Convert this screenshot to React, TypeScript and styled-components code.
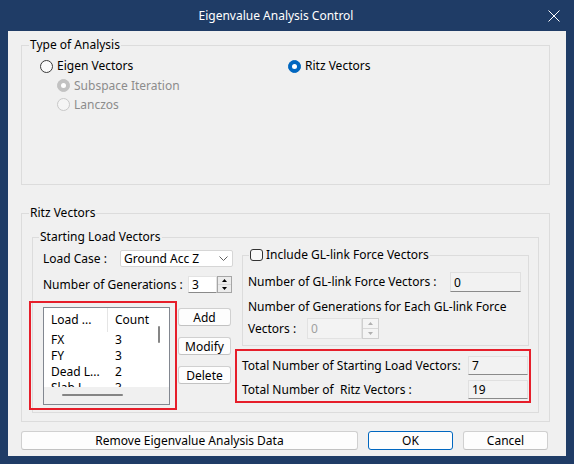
import React from "react";
import styled, { createGlobalStyle, css } from "styled-components";

const GlobalStyle = createGlobalStyle`
  html, body { margin: 0; padding: 0; }
  body {
    font-family: "Noto Sans", "Open Sans", "DejaVu Sans", sans-serif;
    font-size: 12px;
    color: #000;
    background: #1f3c66;
  }
  * { box-sizing: border-box; }
`;

const Window = styled.div`
  width: 574px;
  height: 464px;
  background: #1f3c66;
  display: flex;
  flex-direction: column;
`;

const TitleBar = styled.div`
  height: 31px;
  flex: none;
  display: flex;
  align-items: center;
  color: #fff;
`;

const Title = styled.div`
  flex: 1;
  text-align: center;
  padding-left: 18px;
  line-height: 16px;
`;

const CloseBox = styled.div`
  width: 40px;
  height: 31px;
  display: flex;
  align-items: center;
  justify-content: center;
`;

const Client = styled.div`
  flex: 1;
  margin: 0 8px 8px;
  background: #f0f0f0;
  padding: 6px 16px 0 13px;
  display: flex;
  flex-direction: column;
`;

const Group = styled.fieldset<{ $h?: number; $mt?: number }>`
  margin: 0;
  margin-top: ${(p) => p.$mt ?? 0}px;
  padding: 0;
  min-width: 0;
  border: 1px solid #dcdcdc;
  ${(p) =>
    p.$h !== undefined &&
    css`
      height: ${p.$h}px;
    `}
`;

const Legend = styled.legend<{ $ml: number }>`
  margin-left: ${(p) => p.$ml}px;
  padding: 0 1px;
  height: 16px;
  line-height: 16px;
  display: flex;
  align-items: center;
  gap: 3px;
`;

/* Type of Analysis */
const TypeBody = styled.div`
  display: grid;
  grid-template-columns: 248px 1fr;
  padding: 3px 0 0 18px;
`;

const RadioCol = styled.div`
  display: flex;
  flex-direction: column;
`;

const RadioRow = styled.div<{ $indent?: number; $h: number; $disabled?: boolean }>`
  display: flex;
  align-items: center;
  gap: 4px;
  height: ${(p) => p.$h}px;
  padding-left: ${(p) => p.$indent ?? 0}px;
  color: ${(p) => (p.$disabled ? "#8c8c8c" : "#000")};
  line-height: 16px;
`;

const RadioDot = styled.span<{ $checked?: boolean; $disabled?: boolean }>`
  width: 13px;
  height: 13px;
  flex: none;
  border-radius: 50%;
  display: flex;
  align-items: center;
  justify-content: center;
  border: 1px solid
    ${(p) =>
      p.$checked
        ? p.$disabled
          ? "#c2c2c2"
          : "#0067c0"
        : p.$disabled
        ? "#c8c8c8"
        : "#3a3a3a"};
  background: ${(p) =>
    p.$checked ? (p.$disabled ? "#c2c2c2" : "#0067c0") : p.$disabled ? "#f5f5f5" : "#fafafa"};
  &::after {
    content: "";
    display: ${(p) => (p.$checked ? "block" : "none")};
    width: 5px;
    height: 5px;
    border-radius: 50%;
    background: #fff;
  }
`;

/* Ritz */
const RitzBody = styled.div`
  padding: 8px 10px 8px 10px;
`;

const SLVBody = styled.div`
  display: grid;
  grid-template-columns: 190px 287px;
  column-gap: 9px;
  padding: 2px 9px 7px 10px;
`;

const LeftCol = styled.div`
  display: flex;
  flex-direction: column;
  padding-top: 3px;
`;

const RightCol = styled.div`
  display: flex;
  flex-direction: column;
`;

const FieldRow = styled.div<{ $h: number; $mt?: number }>`
  display: flex;
  align-items: center;
  height: ${(p) => p.$h}px;
  margin-top: ${(p) => p.$mt ?? 0}px;
  line-height: 16px;
  white-space: pre;
`;

const Label = styled.span<{ $w: number }>`
  width: ${(p) => p.$w}px;
  flex: none;
  white-space: pre;
`;

const Combo = styled.div`
  width: 113px;
  height: 17px;
  background: #fff;
  border: 1px solid #d6d6d6;
  border-radius: 2px;
  display: flex;
  align-items: center;
  justify-content: space-between;
  padding: 0 4px 0 3px;
  line-height: 15px;
`;

const EditBox = styled.div<{ $w: number; $h: number; $variant: "white" | "read" | "disabled" }>`
  width: ${(p) => p.$w}px;
  height: ${(p) => p.$h}px;
  flex: none;
  display: flex;
  align-items: center;
  padding-left: 3px;
  line-height: 15px;
  border: 1px solid #e1e1e1;
  ${(p) =>
    p.$variant === "white" &&
    css`
      background: #fff;
      border-color: #e3e3e3 #e3e3e3 #8a8a8a;
    `}
  ${(p) =>
    p.$variant === "read" &&
    css`
      background: #f2f2f2;
      border-color: #e0e0e0 #e0e0e0 #8a8a8a;
    `}
  ${(p) =>
    p.$variant === "disabled" &&
    css`
      background: #f3f3f3;
      border-color: #e2e2e2;
      color: #a0a0a0;
    `}
`;

const SpinGroup = styled.div`
  display: flex;
`;

const SpinButtons = styled.div<{ $w: number; $h: number; $disabled?: boolean }>`
  width: ${(p) => p.$w}px;
  height: ${(p) => p.$h}px;
  flex: none;
  display: flex;
  flex-direction: column;
  border: 1px solid ${(p) => (p.$disabled ? "#cfcfcf" : "#a6a6a6")};
  background: #f0f0f0;
`;

const SpinHalf = styled.div<{ $disabled?: boolean }>`
  flex: 1;
  display: flex;
  align-items: center;
  justify-content: center;
  background: ${(p) => (p.$disabled ? "#f4f4f4" : "#ececec")};
  & + & {
    border-top: 1px solid ${(p) => (p.$disabled ? "#d8d8d8" : "#b8b8b8")};
  }
`;

const ListRow = styled.div`
  display: flex;
  align-items: flex-start;
  margin-top: 14px;
`;

const ListView = styled.div`
  position: relative;
  width: 127px;
  height: 98px;
  border: 1px solid #828790;
  background: #fff;
  display: flex;
  flex-direction: column;
`;

const ListMain = styled.div`
  flex: 1;
  display: flex;
  min-height: 0;
  overflow: hidden;
`;

const ListContent = styled.div`
  flex: 1;
  overflow: hidden;
`;

const ListGrid = styled.div`
  display: grid;
  grid-template-columns: 64px 1fr;
  grid-template-rows: 24px;
  grid-auto-rows: 16px;
  line-height: 16px;
`;

const HeaderCell = styled.div<{ $divider?: boolean }>`
  height: 24px;
  display: flex;
  align-items: center;
  padding-left: 7px;
  white-space: nowrap;
  border-right: ${(p) => (p.$divider ? "1px solid #e5e5e5" : "none")};
`;

const Cell = styled.div`
  padding-left: 7px;
  white-space: nowrap;
  overflow: hidden;
`;

const VScroll = styled.div`
  width: 16px;
  flex: none;
  padding: 18px 0 0 5px;
`;

const VThumb = styled.div`
  width: 2px;
  height: 17px;
  border-radius: 1px;
  background: #858585;
`;

const HScroll = styled.div`
  height: 17px;
  flex: none;
  background: #f0f0f0;
  padding: 7px 0 0 18px;
`;

const HThumb = styled.div`
  width: 61px;
  height: 2px;
  border-radius: 1px;
  background: #858585;
`;

const RedFrame = styled.div<{ $l: number; $t: number; $r: number; $b: number }>`
  position: absolute;
  left: ${(p) => p.$l}px;
  top: ${(p) => p.$t}px;
  right: ${(p) => p.$r}px;
  bottom: ${(p) => p.$b}px;
  border: 2px solid #e61e2a;
  pointer-events: none;
`;

const SideButtons = styled.div`
  display: flex;
  flex-direction: column;
  gap: 11px;
  margin: 1px 0 0 8px;
`;

const Button = styled.button<{ $w?: number; $h: number; $primary?: boolean }>`
  ${(p) =>
    p.$w !== undefined &&
    css`
      width: ${p.$w}px;
    `}
  height: ${(p) => p.$h}px;
  margin: 0;
  padding: 0;
  font: inherit;
  line-height: 15px;
  color: #000;
  background: #fdfdfd;
  border: 1px solid ${(p) => (p.$primary ? "#0067c0" : "#d0d0d0")};
  border-bottom-color: ${(p) => (p.$primary ? "#0067c0" : "#c2c2c2")};
  border-radius: 3px;
`;

const CheckBox = styled.span`
  width: 13px;
  height: 12px;
  border: 1px solid #333;
  border-radius: 3px;
  background: #f8f8f8;
  flex: none;
`;

const GLBody = styled.div`
  padding: 9px 0 6px 5px;
  display: flex;
  flex-direction: column;
`;

const GLText = styled.div`
  margin-top: 7px;
  line-height: 16px;
  white-space: nowrap;
`;

const Totals = styled.div`
  position: relative;
  margin-top: 10px;
  display: flex;
  flex-direction: column;
  gap: 5px;
`;

const BottomBar = styled.div`
  margin-top: 9px;
  display: grid;
  grid-template-columns: 337px 85px 85px;
  column-gap: 10px;
`;

const Chevron = () => (
  <svg width="9" height="5" viewBox="0 0 9 5">
    <polyline points="0.5,0.5 4.5,4.5 8.5,0.5" fill="none" stroke="#606060" strokeWidth="1" />
  </svg>
);

const Arrow = ({ up, color }: { up?: boolean; color: string }) => (
  <svg width="5" height="3" viewBox="0 0 5 3">
    <polygon points={up ? "0,3 5,3 2.5,0" : "0,0 5,0 2.5,3"} fill={color} />
  </svg>
);

const Spin = ({ w, h, disabled }: { w: number; h: number; disabled?: boolean }) => {
  const c = disabled ? "#b0b0b0" : "#000";
  return (
    <SpinButtons $w={w} $h={h} $disabled={disabled}>
      <SpinHalf $disabled={disabled}>
        <Arrow up color={c} />
      </SpinHalf>
      <SpinHalf $disabled={disabled}>
        <Arrow color={c} />
      </SpinHalf>
    </SpinButtons>
  );
};

const rows: [string, string][] = [
  ["FX", "3"],
  ["FY", "3"],
  ["Dead L...", "2"],
  ["Slab L...", "3"],
];

export default function App() {
  return (
    <>
      <GlobalStyle />
      <Window>
        <TitleBar>
          <Title>Eigenvalue Analysis Control</Title>
          <CloseBox>
            <svg width="12" height="12" viewBox="0 0 12 12">
              <path d="M0.5 0.5 L11.5 11.5 M11.5 0.5 L0.5 11.5" stroke="#fff" strokeWidth="1" />
            </svg>
          </CloseBox>
        </TitleBar>
        <Client>
          <Group $h={148}>
            <Legend $ml={7}>Type of Analysis</Legend>
            <TypeBody>
              <RadioCol>
                <RadioRow $h={20}>
                  <RadioDot />
                  Eigen Vectors
                </RadioRow>
                <RadioRow $h={19} $indent={17} $disabled>
                  <RadioDot $checked $disabled />
                  Subspace Iteration
                </RadioRow>
                <RadioRow $h={19} $indent={17} $disabled>
                  <RadioDot $disabled />
                  Lanczos
                </RadioRow>
              </RadioCol>
              <RadioCol>
                <RadioRow $h={20}>
                  <RadioDot $checked />
                  Ritz Vectors
                </RadioRow>
              </RadioCol>
            </TypeBody>
          </Group>

          <Group $mt={20}>
            <Legend $ml={7}>Ritz Vectors</Legend>
            <RitzBody>
              <Group>
                <Legend $ml={6}>Starting Load Vectors</Legend>
                <SLVBody>
                  <LeftCol>
                    <FieldRow $h={17}>
                      <Label $w={77}>Load Case :</Label>
                      <Combo>
                        <span>Ground Acc Z</span>
                        <Chevron />
                      </Combo>
                    </FieldRow>
                    <FieldRow $h={17} $mt={9}>
                      <Label $w={145}>Number of Generations :</Label>
                      <SpinGroup>
                        <EditBox $w={29} $h={17} $variant="white">
                          3
                        </EditBox>
                        <Spin w={15} h={17} />
                      </SpinGroup>
                    </FieldRow>
                    <ListRow>
                      <ListView>
                        <ListMain>
                          <ListContent>
                            <ListGrid>
                              <HeaderCell $divider>Load ...</HeaderCell>
                              <HeaderCell>Count</HeaderCell>
                              {rows.map(([n, c]) => (
                                <React.Fragment key={n}>
                                  <Cell>{n}</Cell>
                                  <Cell>{c}</Cell>
                                </React.Fragment>
                              ))}
                            </ListGrid>
                          </ListContent>
                          <VScroll>
                            <VThumb />
                          </VScroll>
                        </ListMain>
                        <HScroll>
                          <HThumb />
                        </HScroll>
                        <RedFrame $l={-15} $t={-7} $r={-8} $b={-6} />
                      </ListView>
                      <SideButtons>
                        <Button $w={53} $h={18}>Add</Button>
                        <Button $w={53} $h={18}>Modify</Button>
                        <Button $w={53} $h={18}>Delete</Button>
                      </SideButtons>
                    </ListRow>
                  </LeftCol>

                  <RightCol>
                    <Group>
                      <Legend $ml={6}>
                        <CheckBox />
                        Include GL-link Force Vectors
                      </Legend>
                      <GLBody>
                        <FieldRow $h={20}>
                          <Label $w={202}>Number of GL-link Force Vectors :</Label>
                          <EditBox $w={71} $h={20} $variant="read">
                            0
                          </EditBox>
                        </FieldRow>
                        <GLText>Number of Generations for Each GL-link Force</GLText>
                        <FieldRow $h={21} $mt={3}>
                          <Label $w={59}>Vectors :</Label>
                          <SpinGroup>
                            <EditBox $w={55} $h={21} $variant="disabled">
                              0
                            </EditBox>
                            <Spin w={17} h={21} disabled />
                          </SpinGroup>
                        </FieldRow>
                      </GLBody>
                    </Group>
                    <Totals>
                      <FieldRow $h={19}>
                        <Label $w={226}>Total Number of Starting Load Vectors:</Label>
                        <EditBox $w={60} $h={19} $variant="read">
                          7
                        </EditBox>
                      </FieldRow>
                      <FieldRow $h={19}>
                        <Label $w={226}>Total Number of  Ritz Vectors :</Label>
                        <EditBox $w={60} $h={19} $variant="read">
                          19
                        </EditBox>
                      </FieldRow>
                      <RedFrame $l={-7} $t={-7} $r={-2} $b={-4} />
                    </Totals>
                  </RightCol>
                </SLVBody>
              </Group>
            </RitzBody>
          </Group>

          <BottomBar>
            <Button $h={19}>Remove Eigenvalue Analysis Data</Button>
            <Button $h={19} $primary>
              OK
            </Button>
            <Button $h={19}>Cancel</Button>
          </BottomBar>
        </Client>
      </Window>
    </>
  );
}
